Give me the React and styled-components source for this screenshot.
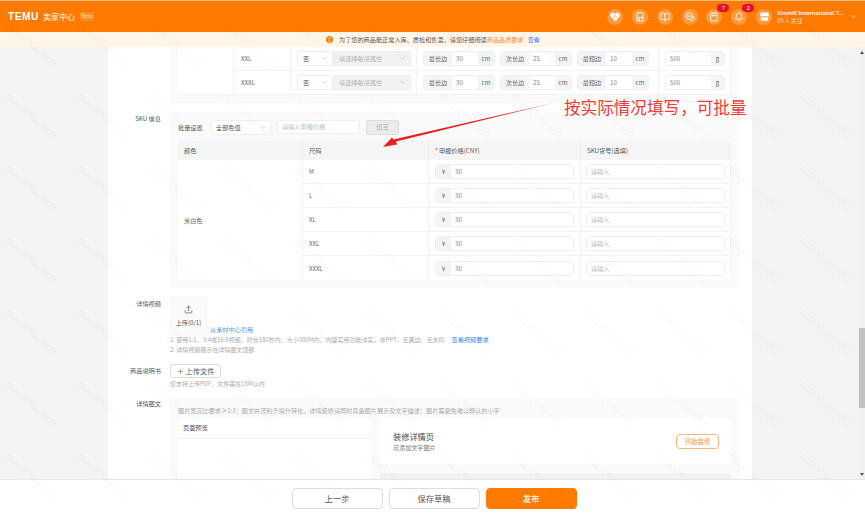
import React from 'react';
import styled, { createGlobalStyle } from 'styled-components';
import { BookOpen, Bell, ChevronDown, Upload, Plus } from 'lucide-react';

const Global = createGlobalStyle`
  html, body { margin: 0; height: 100%; overflow: hidden; }
  body { font-family: "Noto Sans CJK SC", "Noto Sans", sans-serif; color: #555; background: #f4f4f4; }
  * { box-sizing: border-box; }
  #root { height: 100%; }
`;

const Page = styled.div`position: relative; display: flex; flex-direction: column; height: 100vh; overflow: hidden;`;
const Header = styled.header`flex: none; height: 32px; border-top: 1px solid #eebd8c; background: #ff7a00; display: flex; align-items: center; padding: 0 7px 0 8px; color: #fff;`;
const Logo = styled.span`font: 700 10.2px "Liberation Sans", sans-serif; letter-spacing: .5px; width: 35px;`;
const Brand = styled.span`font-size: 8px; width: 37px; white-space: nowrap;`;
const Beta = styled.span`font-size: 5.5px; width: 14px; height: 9px; line-height: 9px; text-align: center; background: rgba(255,255,255,.14); color: #ffd9b8;`;
const Spacer = styled.div`flex: 1;`;
const IconRow = styled.div`display: flex; gap: 8.8px; align-items: center;`;
const IconCircle = styled.div`position: relative; width: 16px; height: 16px; border-radius: 50%; background: rgba(255,255,255,.24); display: flex; align-items: center; justify-content: center; color: #fff;`;
const Badge = styled.span`position: absolute; top: -5px; left: 11px; width: 12px; height: 8px; border-radius: 4px; background: #e8112d; color: #fff; font-size: 5.5px; line-height: 8px; text-align: center;`;
const User = styled.div`margin-left: 5px; width: 67px; display: flex; flex-direction: column; font-size: 5.9px; line-height: 8px; white-space: nowrap; overflow: hidden;`;
const UserName = styled.span`font-family: "Noto Sans", sans-serif; font-weight: 600; font-size: 5.6px;`;
const Follow = styled.span`color: #ffe3c8;`;
const HeaderChevron = styled.div`margin-left: 5px; display: flex; color: #fff;`;

const Notice = styled.div`flex: none; height: 15px; background: #fff6e8; display: flex; align-items: center; padding-left: 326px; font-size: 6.17px; color: #555; white-space: nowrap;`;
const NoticeIcon = styled.span`width: 7px; height: 7px; border-radius: 50%; background: #f77f0c; color: #fff; font-size: 6px; line-height: 7px; font-weight: 700; text-align: center; margin-right: 6px;`;
const OrangeText = styled.span`color: #f79443;`;
const BlueLink = styled.span`color: #3f85ee; margin-left: ${p => p.$gap || 0}px;`;

const Body = styled.div`flex: 1; min-height: 0; display: flex;`;
const Gutter = styled.div`flex: none; width: 108px;`;
const Content = styled.main`flex: none; width: 644px; background: #fff; overflow: hidden; display: flex; flex-direction: column; gap: 9px;`;
const RightGutter = styled.div`flex: 1;`;
const ScrollTrack = styled.div`flex: none; width: 6px; background: #f1f1f1; display: flex; flex-direction: column; align-items: center; position: relative;`;
const ArrowUp = styled.span`margin-top: 4px; width: 0; height: 0; border: 2px solid transparent; border-top: 0; border-bottom: 3px solid #555;`;
const Thumb = styled.div`width: 6px; height: 80px; margin-top: 274px; background: #c1c1c1;`;
const ArrowDown = styled.span`margin-top: auto; margin-bottom: 3px; width: 0; height: 0; border: 2px solid transparent; border-bottom: 0; border-top: 3px solid #555;`;

const Field = styled.section`display: grid; grid-template-columns: 53px 570px; column-gap: 9px; flex: none;`;
const Label = styled.div`text-align: right; font-size: 6.2px; line-height: ${p => p.$lh ?? 14}px; color: #555; white-space: nowrap;`;
const GrayPanel = styled.div`background: #fafafa; padding: ${p => p.$top ?? 8}px 9px 8px 8px; border-radius: 2px;`;

const DimTable = styled.div`background: #fff; display: grid; grid-template-columns: 56px 57px 126px 242px 72px; border: 0; border-radius: 0 0 3px 3px;`;
const DimBlank = styled.div`grid-row: 1 / span 2; border-right: 1px solid #f2f2f2; border-bottom: 1px solid #f2f2f2;`;
const DimCell = styled.div`height: 24px; display: flex; align-items: center; padding-left: ${p => p.$pad ?? 6}px; gap: ${p => p.$gap ?? 0}px; border-right: 1px solid #f4f4f4; border-bottom: 1px solid #f2f2f2; font-size: 6.2px; color: #666;`;
const SelectBox = styled.div`width: ${p => p.$w}px; height: 15px; display: flex; align-items: center; justify-content: space-between; padding: 0 4px 0 ${p => p.$pl ?? 5}px; background: ${p => p.$disabled ? '#f2f2f2' : '#fff'}; border: 1px solid ${p => p.$disabled ? '#eee' : '#efefef'}; border-radius: ${p => p.$round ?? 2}px; color: ${p => p.$disabled ? '#b5b5b5' : '#555'}; font-size: 6.2px; white-space: nowrap; flex: none;`;
const Joined = styled.div`display: flex;`;
const InputGroup = styled.div`display: flex; flex: none; width: ${p => p.$w}px; height: 15px; border: 1px solid #efefef; border-radius: 3px; overflow: hidden; background: #fff; font-size: 6.2px; align-items: stretch;`;
const Addon = styled.span`flex: none; width: ${p => p.$w}px; background: #f4f4f4; color: #666; display: flex; align-items: center; justify-content: center;`;
const Val = styled.span`flex: 1; padding-left: ${p => p.$pl ?? 4}px; color: #888; display: flex; align-items: center;`;

const BatchRow = styled.div`display: flex; align-items: center; height: 14px; margin-bottom: 7px; font-size: 6.2px; color: #555;`;
const BatchLabel = styled.span`width: 33px; flex: none;`;
const BatchInput = styled.div`width: 83px; height: 14px; margin-left: 5px; border: 1px solid #efefef; border-radius: 2px; background: #fff; color: #bbb; padding-left: 4px; line-height: 12px; flex: none;`;
const FillBtn = styled.div`width: 33px; height: 15px; margin-left: 6px; border: 1px solid #ddd; border-radius: 2px; background: #ececec; color: #b5b5b5; text-align: center; line-height: 13px; font-size: 6.5px;`;

const SkuTable = styled.div`display: grid; grid-template-columns: 125px 126px 152px 150px; grid-template-rows: 19px repeat(5, 24px); background: #fff; border-radius: 3px; overflow: hidden;`;
const Th = styled.div`background: #f5f5f5; padding-left: ${p => p.$pl ?? 6}px; display: flex; align-items: center; font-size: 6.2px; color: #555; border-right: 1px solid #efefef; white-space: nowrap;`;
const Req = styled.span`color: #e33; margin-right: 1px;`;
const ColorCell = styled.div`grid-row: 2 / span 5; display: flex; align-items: center; padding-left: 6px; font-size: 6.2px; color: #666; border-right: 1px solid #f2f2f2;`;
const Td = styled.div`display: flex; align-items: center; padding-left: ${p => p.$pl ?? 6}px; border-right: 1px solid #f4f4f4; border-bottom: ${p => p.$last ? 0 : 1}px solid #f2f2f2; font-size: 6px; color: #666;`;
const PricePlaceholder = styled.div`width: 139px; height: 15px; border: 1px solid #efefef; border-radius: 3px; padding-left: 4px; color: #bbb; font-size: 6.2px; line-height: 13px;`;

const UploadRow = styled.div`display: flex; align-items: flex-end; gap: 3px;`;
const Uploader = styled.div`width: 37px; height: 38px; background: #fafafa; border: 1px solid #f5f5f5; border-radius: 2px; display: flex; flex-direction: column; align-items: center; justify-content: center; gap: 4px; color: #555; font-size: 6.1px; white-space: nowrap;`;
const SourceLink = styled.span`font-size: 6.2px; line-height: 10px; color: #5b94ec; white-space: nowrap;`;
const Hint = styled.div`font-size: 6px; line-height: 10px; color: #aaa; white-space: nowrap;`;
const HintBlue = styled.span`color: #3f85ee; margin-left: 7px; font-size: 6.2px;`;
const FileBtn = styled.div`width: 51px; height: 14px; border: 1px solid #ddd; border-radius: 3px; display: flex; align-items: center; justify-content: center; gap: 2px; background: #fff; color: #555; font-size: 7.2px;`;
const FileHint = styled(Hint)`margin-top: 1px;`;

const DetailPanel = styled(GrayPanel)`height: 100px;`;
const DetailHint = styled(Hint)`margin-bottom: 2px; font-size: 6.15px;`;
const DetailGrid = styled.div`display: grid; grid-template-columns: 193px 351px; column-gap: 9px;`;
const Preview = styled.div`height: 90px; background: #fff; border-radius: 3px 3px 0 0;`;
const PreviewHead = styled.div`height: 21px; border-bottom: 1px solid #eee; padding-left: 5px; line-height: 20px; font-size: 6.2px; color: #555;`;
const Column = styled.div`display: flex; flex-direction: column; gap: 9px;`;
const DecorCard = styled.div`height: 46px; background: #fff; border-radius: 3px; padding: 0 12px 0 13px; display: flex; align-items: center; justify-content: space-between;`;
const DecorTitle = styled.div`font-size: 8.2px; line-height: 12px; color: #444; margin-top: -1px;`;
const DecorSub = styled.div`font-size: 6.1px; line-height: 8px; margin-top: 2px; color: #777;`;
const DecorBtn = styled.div`width: 43px; height: 15px; border: 1px solid #fbb47a; border-radius: 4px; color: #f79443; font-size: 6.4px; line-height: 13px; text-align: center;`;
const NextCard = styled.div`height: 30px; background: #f2f2f2; border-radius: 3px 3px 0 0;`;

const Footer = styled.footer`flex: none; height: 38px; background: #fff; border-top: 1px solid #e6e6e6; display: flex; justify-content: center; align-items: center; gap: 6px; padding: 0 0 0 3px;`;
const FootBtn = styled.div`width: 91px; height: 21px; border-radius: 4px; border: 1px solid ${p => p.$primary ? '#ff7a00' : '#ddd'}; background: ${p => p.$primary ? '#ff7a00' : '#fff'}; color: ${p => p.$primary ? '#fff' : '#555'}; text-align: center; font-size: 8.3px; line-height: 19px; font-weight: ${p => p.$primary ? 500 : 400};`;

const Annotation = styled.div`position: absolute; left: 564px; top: 95px; font-size: 16.6px; line-height: 24px; color: #f23a35; white-space: nowrap; z-index: 5;`;
const ArrowSvg = styled.svg`position: absolute; left: 0; top: 0; z-index: 5; pointer-events: none;`;
const Watermarks = styled.div`position: absolute; left: -6px; top: 8px; display: grid; grid-template-columns: repeat(12, 72.3px); grid-auto-rows: 72px; pointer-events: none; z-index: 4;`;
const Mark = styled.span`display: flex; align-items: center; justify-content: center; white-space: nowrap; transform: rotate(40deg); font: 9px "Liberation Sans", sans-serif; color: rgba(0,0,0,.05);`;

const Chev = ({ size = 7 }) => <ChevronDown size={size} strokeWidth={1.5} color="#999" />;
const I = ({ children }) => <svg width="10" height="10" viewBox="0 0 24 24" fill="none" stroke="#fff" strokeWidth="2.4" strokeLinejoin="round" strokeLinecap="round">{children}</svg>;
const headerIcons = [
  { k: 'heart', d: <><path d="M12 21 3 12a5.5 5.5 0 0 1 8-8l1 1 1-1a5.5 5.5 0 0 1 8 8z" fill="#fff" /><path d="M13 5 8 10.5l4 2-3 3M14 11l4 3" stroke="#ff9a40" strokeWidth="1.8" /></> },
  { k: 'panel', d: <><rect x="5" y="2" width="14" height="20" rx="2" /><path d="M5 13h14M10 13v9" /></> },
  { k: 'book', lucide: BookOpen },
  { k: 'chat', d: <><circle cx="10" cy="10" r="7.5" /><path d="M7 10h6M20 10a6.5 6.5 0 0 1-4 11l-3-1" /></> },
  { k: 'note', d: <><rect x="4" y="3" width="16" height="18" rx="2" /><path d="M8 9h8M8 2v3M16 2v3" /></>, badge: 7 },
  { k: 'bell', lucide: Bell, badge: 2 },
];
const sizes = ['M', 'L', 'XL', 'XXL', 'XXXL'];

const DimRow = ({ size }) => (
  <>
    <DimCell $pad={7}>{size}</DimCell>
    <DimCell>
      <Joined>
        <SelectBox $w={36}>否<Chev /></SelectBox>
        <SelectBox $w={78} $disabled>请选择敏感属性<Chev /></SelectBox>
      </Joined>
    </DimCell>
    <DimCell $gap={5}>
      {[['最长边', 30], ['次长边', 25], ['最短边', 10]].map(([l, v]) => (
        <InputGroup key={l} $w={72}>
          <Addon $w={28}>{l}</Addon><Val>{v}</Val><Addon $w={16}>cm</Addon>
        </InputGroup>
      ))}
    </DimCell>
    <DimCell>
      <InputGroup $w={60}><Val>500</Val><Addon $w={13}>g</Addon></InputGroup>
    </DimCell>
  </>
);

export default function App() {
  return (
    <Page>
      <Global />
      <Header>
        <Logo>TEMU</Logo>
        <Brand>卖家中心</Brand>
        <Beta>Beta</Beta>
        <Spacer />
        <IconRow>
          {headerIcons.map(ic => (
            <IconCircle key={ic.k}>
              {ic.lucide ? <ic.lucide size={10} strokeWidth={2.2} /> : <I>{ic.d}</I>}
              {ic.badge && <Badge>{ic.badge}</Badge>}
            </IconCircle>
          ))}
          <IconCircle>
            <svg width="11" height="11" viewBox="0 0 24 24" fill="#fff"><path d="M4 3h16l2 6a3 3 0 0 1-2 3v9H4v-9a3 3 0 0 1-2-3z" /><path d="M4 11h16v3H4z" fill="#ffb26b" /></svg>
          </IconCircle>
        </IconRow>
        <User>
          <UserName>Xinshili International T...</UserName>
          <Follow>85 人关注</Follow>
        </User>
        <HeaderChevron><ChevronDown size={9} strokeWidth={1.6} /></HeaderChevron>
      </Header>
      <Notice>
        <NoticeIcon>!</NoticeIcon>
        为了您的商品能正常入库、质检和售卖，请您仔细阅读<OrangeText>商品品质要求</OrangeText><BlueLink $gap={4}>查看</BlueLink>
      </Notice>
      <Body>
        <Gutter />
        <Content>
          <Field>
            <div />
            <GrayPanel $top={0}>
              <DimTable>
                <DimBlank />
                <DimRow size="XXL" />
                <DimRow size="XXXL" />
              </DimTable>
            </GrayPanel>
          </Field>
          <Field>
            <Label>SKU 信息</Label>
            <GrayPanel>
              <BatchRow>
                <BatchLabel>批量设置</BatchLabel>
                <SelectBox $w={61} $pl={4} $round={3}>全部色值<Chev /></SelectBox>
                <BatchInput>请输入申报价格</BatchInput>
                <FillBtn>填写</FillBtn>
              </BatchRow>
              <SkuTable>
                <Th>颜色</Th>
                <Th>尺码</Th>
                <Th><Req>*</Req>申报价格(CNY)</Th>
                <Th>SKU货号(选填)</Th>
                <ColorCell>米白色</ColorCell>
                {sizes.map((s, i) => (
                  <React.Fragment key={s}>
                    <Td $last={i === 4}>{s}</Td>
                    <Td $last={i === 4}>
                      <InputGroup $w={139}><Addon $w={15}>¥</Addon><Val>30</Val></InputGroup>
                    </Td>
                    <Td $last={i === 4} $pl={5}><PricePlaceholder>请输入</PricePlaceholder></Td>
                  </React.Fragment>
                ))}
              </SkuTable>
            </GrayPanel>
          </Field>
          <Field>
            <Label>详情视频</Label>
            <div>
              <UploadRow>
                <Uploader><Upload size={9} strokeWidth={1.8} />上传(0/1)</Uploader>
                <SourceLink>从素材中心引用</SourceLink>
              </UploadRow>
              <Hint>1. 使用1:1、3:4或16:9视频，时长180秒内，大小300M内，内容实用功能详实，非PPT，无黑边、无水印<HintBlue>查看视频要求</HintBlue></Hint>
              <Hint>2. 详情视频展示在详情图文顶部</Hint>
            </div>
          </Field>
          <Field>
            <Label>商品说明书</Label>
            <div>
              <FileBtn><Plus size={7} strokeWidth={1.8} />上传文件</FileBtn>
              <FileHint>仅支持上传PDF，文件需在15M以内</FileHint>
            </div>
          </Field>
          <Field>
            <Label $lh={12}>详情图文</Label>
            <DetailPanel>
              <DetailHint>图片宽高比要求≥1:3；图文并茂利于提升转化。详情装修请同时具备图片展示及文字描述；图片需避免难以辨认的小字</DetailHint>
              <DetailGrid>
                <Preview><PreviewHead>页面预览</PreviewHead></Preview>
                <Column>
                  <DecorCard>
                    <div>
                      <DecorTitle>装修详情页</DecorTitle>
                      <DecorSub>可添加文字图片</DecorSub>
                    </div>
                    <DecorBtn>开始装修</DecorBtn>
                  </DecorCard>
                  <NextCard />
                </Column>
              </DetailGrid>
            </DetailPanel>
          </Field>
        </Content>
        <RightGutter />
        <ScrollTrack>
          <ArrowUp />
          <Thumb />
          <ArrowDown />
        </ScrollTrack>
      </Body>
      <Footer>
        <FootBtn>上一步</FootBtn>
        <FootBtn>保存草稿</FootBtn>
        <FootBtn $primary>发布</FootBtn>
      </Footer>
      <Watermarks>
        {Array.from({ length: 12 * 7 }, (_, i) => <Mark key={i}>4846829868603</Mark>)}
      </Watermarks>
      <ArrowSvg width="865" height="517" viewBox="0 0 865 517">
        <polygon points="553,103 396,141.5 397,144.5 383,147 392,137.5 393.5,139.5" fill="#ee1c1c" />
      </ArrowSvg>
      <Annotation>按实际情况填写，可批量</Annotation>
    </Page>
  );
}
